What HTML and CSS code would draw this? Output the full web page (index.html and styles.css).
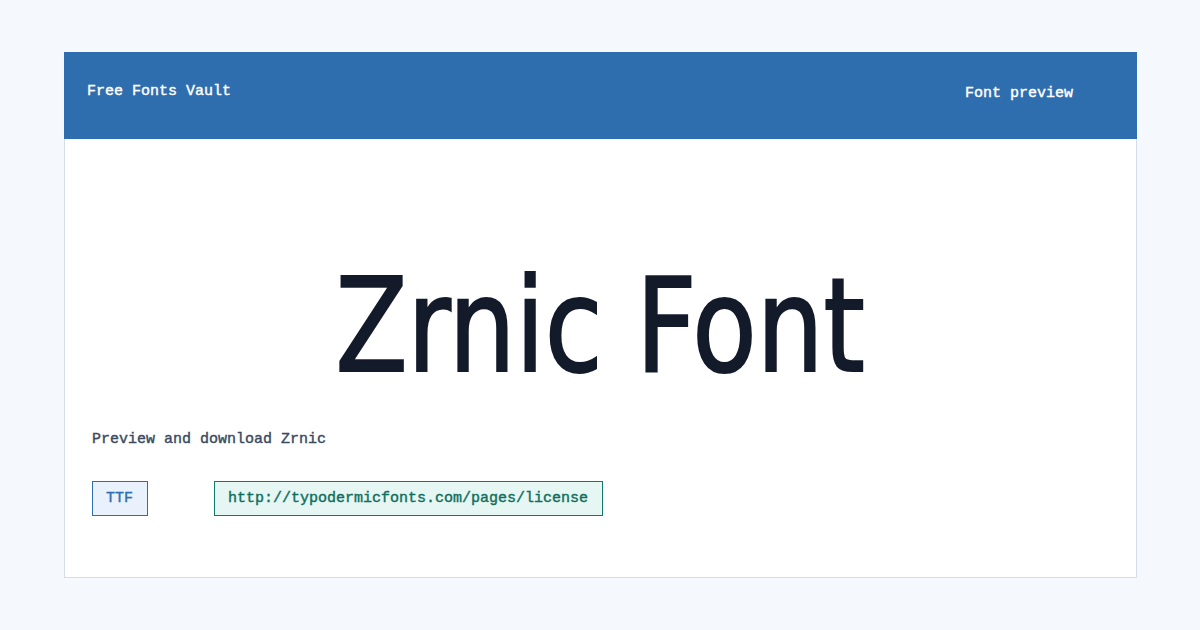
FILE: index.html
```html
<!DOCTYPE html>
<html lang="en">

<head>
  <meta charset="UTF-8">
  <meta name="viewport" content="width=device-width, initial-scale=1.0">
  <title>Zrnic Font - Free Fonts Vault</title>
  <link rel="stylesheet" href="styles.css">
</head>

<body>
  <div class="card">
    <div class="topbar">
      <div class="brand">Free Fonts Vault</div>
      <div class="nav">Font preview</div>
    </div>
    <div class="content">
      <div class="sample">
        <h1>Zrnic Font</h1>
      </div>
      <p class="lead">Preview and download Zrnic</p>
      <div class="tags">
        <span class="tag format">TTF</span>
        <span class="tag license">http://typodermicfonts.com/pages/license</span>
      </div>
    </div>
  </div>
</body>

</html>
```

FILE: styles.css
```css
body {
  margin: 0;
  background-color: #f5f9fe;
  font-family: "Liberation Mono", monospace;
  font-size: 15px;
}

.card {
  margin: 52px 63px 0 64px;
  height: 526px;
  box-sizing: border-box;
  background-color: #fff;
  border: 1px solid #d5dde9;
  border-top: none;
}

.topbar {
  display: flex;
  justify-content: space-between;
  align-items: center;
  height: 87px;
  margin: 0 -1px;
  padding: 0 64px 0 23px;
  background-color: #2f6eae;
  color: #fff;
  -webkit-text-stroke: 0.4px #fff;
}

.brand {
  margin-top: -9px;
}

.nav {
  margin-top: -5px;
}

.content {
  padding: 0 27px;
}

.sample {
  display: flex;
  justify-content: center;
  padding-top: 122px;
  height: 141px;
}

h1 {
  margin: 0;
  font-family: "DejaVu Sans Condensed", "DejaVu Sans", sans-serif;
  font-weight: normal;
  font-size: 130px;
  line-height: 130px;
  color: #131a2a;
  -webkit-text-stroke: 2px #131a2a;
  transform: scaleX(0.9);
}

.lead {
  margin: 29px 0 0;
  color: #3a4a5e;
  -webkit-text-stroke: 0.4px #3a4a5e;
}

.tags {
  display: flex;
  gap: 66px;
  margin-top: 33px;
}

.tag {
  padding: 8px 14px 8px 13px;
  border: 1px solid;
  -webkit-text-stroke: 0.4px currentColor;
}

.format {
  background-color: #e8f1fc;
  border-color: #2f6eae;
  color: #2f6eae;
}

.license {
  background-color: #e6f6f2;
  border-color: #0f7a6c;
  color: #0f6e5e;
}
```
